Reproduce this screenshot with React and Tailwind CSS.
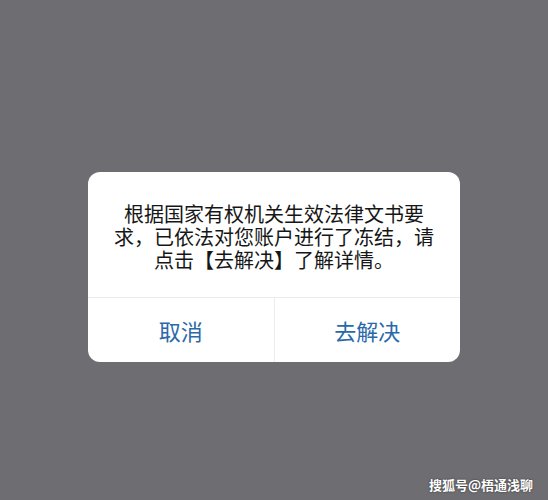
import React from 'react';

export default function App() {
  return (
    <div
      className="relative w-full h-[500px] bg-[#6e6d72] flex flex-col items-center pt-[172px]"
      style={{ fontFamily: '"Noto Sans CJK SC", "Noto Sans", sans-serif' }}
    >
      <div className="w-[372px] bg-white rounded-[12px] overflow-hidden">
        <div className="pt-[30px] pb-[26px] px-4 text-center text-[20px] leading-[23px] text-[#161616]">
          <p>根据国家有权机关生效法律文书要</p>
          <p>求，已依法对您账户进行了冻结，请</p>
          <p>点击【去解决】了解详情。</p>
        </div>
        <div className="flex h-[65px] border-t border-[#ececec]">
          <button className="flex-1 flex items-center justify-center text-[22px] text-[#2a68ab]">
            取消
          </button>
          <div className="w-px bg-[#ececec]" />
          <button className="flex-1 flex items-center justify-center text-[22px] text-[#2a68ab]">
            去解决
          </button>
        </div>
      </div>
      <div className="absolute right-[15px] bottom-[6px] text-[13px] font-bold text-white [text-shadow:0_0_2px_rgba(0,0,0,0.6)]">
        搜狐号@梧通浅聊
      </div>
    </div>
  );
}
